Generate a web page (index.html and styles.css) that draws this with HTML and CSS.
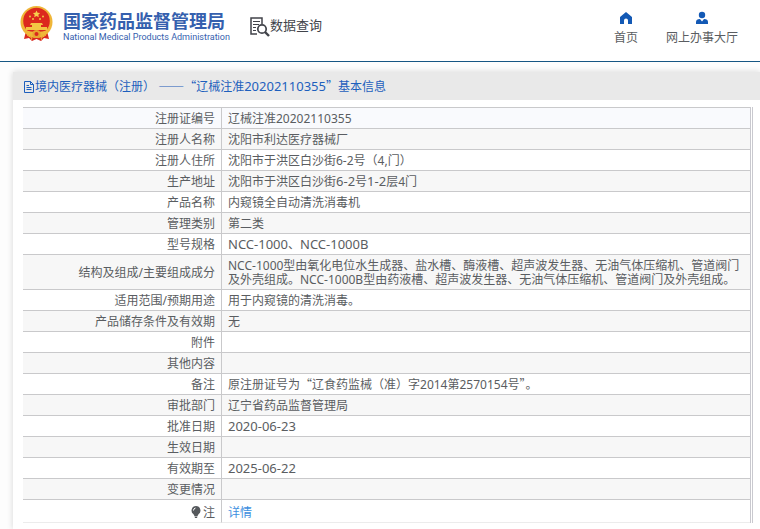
FILE: index.html
```html
<!DOCTYPE html>
<html lang="zh-CN">
<head>
<meta charset="utf-8">
<title>数据查询</title>
<link rel="stylesheet" href="styles.css">
</head>
<body>
<header class="header">
  <div class="brand">
    <svg class="emblem" viewBox="0 0 33 36" aria-hidden="true">
      <path d="M6 25L4 33l5-1 3 3 4.500-2 4.500 2 3-3 5 1-2-8z" fill="#d9281f"/>
      <circle cx="16.500" cy="16" r="16" fill="#efb638"/>
      <circle cx="16.500" cy="15" r="13.300" fill="#dc291e"/>
      <path d="M16.500 4.500l1.100 2.300 2.500.300-1.800 1.700.5 2.500-2.300-1.200-2.300 1.200.5-2.500-1.800-1.700 2.500-.3z" fill="#f6d04d"/>
      <g fill="#f3c544"><circle cx="10" cy="10.500" r="1"/><circle cx="13" cy="13" r="1"/><circle cx="20" cy="13" r="1"/><circle cx="23" cy="10.500" r="1"/>
      <path d="M11 17h11l1 2H10zM12 19h9v2h-9zM6 21h21v3H6z"/></g>
      <path d="M5 24q11.500 4 23 0l-3 4q-8.500 3-17 0z" fill="#f0b83a"/>
      <circle cx="16.500" cy="28" r="4" fill="#e7a52f"/><circle cx="16.500" cy="28" r="2" fill="#d9281f"/>
      <path d="M7 29l5 3-1 2M26 29l-5 3 1 2" fill="none" stroke="#f0b83a"/>
    </svg>
    <div class="names">
      <span class="name-zh">国家药品监督管理局</span>
      <span class="name-en">National Medical Products Administration</span>
    </div>
  </div>
  <div class="section">
    <svg class="search-icon" viewBox="0 0 20 20" aria-hidden="true" fill="none" stroke="#41434a">
      <path d="M7 17H1V1h11v6" stroke-width="1.500"/><path d="M3 4.500h7M3 7.500h6M3 10.500h3M3 13.500h3" stroke-width="1.200"/>
      <circle cx="12" cy="12" r="4.200" stroke-width="1.700"/><path d="M15 15l4 4" stroke-width="2.400"/>
    </svg>
    <span>数据查询</span>
  </div>
  <nav class="nav">
    <a href="#home"><svg viewBox="0 0 14 14" aria-hidden="true"><path d="M7 1L1 6v7h4V9.500q0-2 2-2t2 2V13h4V6z" fill="#1359b5"/></svg>首页</a>
    <a href="#hall"><svg viewBox="0 0 14 14" aria-hidden="true"><circle cx="7" cy="4" r="3.200" fill="#1359b5"/><path d="M1 13V11q0-3 4-3l2 2.500L9 8q4 0 4 3v2z" fill="#1359b5"/></svg>网上办事大厅</a>
  </nav>
</header>
<main class="panel">
  <h1 class="title"><svg viewBox="0 0 12 12" aria-hidden="true" fill="none" stroke="#1d5fbd"><path d="M1.500.5h6l3 3v8h-9zM7.500.5v3h3M3.500 4.500H6M3.500 6.500h5M3.500 8.500h5"/></svg><span>境内医疗器械（注册） <span class="dash">——</span><span class="cjk">“</span>辽械注准<span class="latin">20202110355</span><span class="cjk">”</span>基本信息</span></h1>
  <div class="content">
    <table class="info">
      <tbody>
        <tr class="first"><th scope="row">注册证编号</th><td>辽械注准20202110355</td></tr>
        <tr><th scope="row">注册人名称</th><td>沈阳市利达医疗器械厂</td></tr>
        <tr><th scope="row">注册人住所</th><td>沈阳市于洪区白沙街6-2号（4,门）</td></tr>
        <tr><th scope="row">生产地址</th><td>沈阳市于洪区白沙街<span class="latin">6-2</span>号<span class="latin">1-2</span>层4门</td></tr>
        <tr><th scope="row">产品名称</th><td>内窥镜全自动清洗消毒机</td></tr>
        <tr><th scope="row">管理类别</th><td>第二类</td></tr>
        <tr><th scope="row">型号规格</th><td><span class="latin">NCC-1000</span>、<span class="latin">NCC-1000B</span></td></tr>
        <tr><th scope="row">结构及组成/主要组成成分</th><td>NCC-1000型由氧化电位水生成器、盐水槽、酶液槽、超声波发生器、无油气体压缩机、管道阀门及外壳组成。NCC-1000B型由药液槽、超声波发生器、无油气体压缩机、管道阀门及外壳组成。</td></tr>
        <tr><th scope="row">适用范围/预期用途</th><td>用于内窥镜的清洗消毒。</td></tr>
        <tr><th scope="row">产品储存条件及有效期</th><td>无</td></tr>
        <tr><th scope="row">附件</th><td></td></tr>
        <tr><th scope="row">其他内容</th><td></td></tr>
        <tr><th scope="row">备注</th><td>原注册证号为<span class="cjk">“</span>辽食药监械（准）字2014第2570154号<span class="cjk">”</span>。</td></tr>
        <tr><th scope="row">审批部门</th><td>辽宁省药品监督管理局</td></tr>
        <tr><th scope="row">批准日期</th><td><span class="latin">2020-06-23</span></td></tr>
        <tr><th scope="row">生效日期</th><td></td></tr>
        <tr><th scope="row">有效期至</th><td><span class="latin">2025-06-22</span></td></tr>
        <tr><th scope="row">变更情况</th><td></td></tr>
        <tr class="note"><th scope="row"><svg viewBox="0 0 10 12" aria-hidden="true"><path d="M5 0a4.500 4.500 0 0 1 2.500 8.200L6.500 10h-3l-1-1.800A4.500 4.500 0 0 1 5 0zM3.500 10.500h3L6 12H4z" fill="#55585c"/><path d="M2.500 4.500q0-2 2-2.500" stroke="#fff" fill="none"/></svg>注</th><td><a href="#detail">详情</a></td></tr>
      </tbody>
    </table>
  </div>
</main>
</body>
</html>
```
FILE: styles.css
```css
* { box-sizing: border-box; }
body {
  margin: 0;
  background: #fdfdfd;
  color: #5a5d61;
  font: 12px/14px "Noto Sans", "Noto Sans CJK SC", sans-serif;
}
a { color: inherit; text-decoration: none; }
.cjk, .dash { font-family: "Noto Sans CJK SC", sans-serif; line-height: 1; }
.dash { font-size: 13px; }
.latin { font-size: 13px; line-height: 1; }

.header {
  display: flex;
  align-items: flex-start;
  height: 62px;
  padding: 6px 22px 0 20px;
  border-bottom: 1px solid #175784;
  background: #fff;
}
.brand { display: flex; gap: 10px; }
.emblem { width: 33px; height: 36px; }
.names { display: flex; flex-direction: column; padding-top: 4px; color: #3560ae; white-space: nowrap; }
.name-zh { font: bold 18px/20px "Noto Sans CJK SC", sans-serif; }
.name-en { font: 9px/14px Roboto, sans-serif; }
.section {
  display: flex;
  align-items: center;
  margin: 7px 0 0 20px;
  color: #41434a;
  font-size: 13px;
  line-height: 22px;
}
.search-icon { width: 20px; height: 20px; margin-top: 4px; }
.nav { display: flex; gap: 28px; margin-left: auto; padding-top: 5px; }
.nav a { display: flex; flex-direction: column; align-items: center; line-height: 26px; }
.nav svg { width: 14px; height: 14px; }

.panel {
  margin: 10px 0 0 13px;
  min-height: calc(100vh - 72px);
  box-shadow: 0 0 6px #d5d5d5;
  background: #fff;
}
.title {
  display: flex;
  align-items: center;
  margin: 0;
  padding: 1px 10px 0;
  height: 28px;
  background: #e9e9e9;
  color: #1d5fbd;
  font-size: 12px;
  font-weight: normal;
  white-space: pre;
}
.title svg { width: 12px; height: 12px; }
.content { padding: 7px 7px 0 10px; }
.info {
  width: 100%;
  border-spacing: 0;
  border-right: 3px double #c9c9cf;
}
.info th, .info td {
  height: 21px;
  padding: 4px 6px 2px;
  border-top: 1px solid #c9c9cb;
  line-height: 14px;
}
.info th {
  width: 199px;
  border-right: 1px solid #c9c9cb;
  font-weight: normal;
  text-align: right;
}
.info tr:nth-child(even) { background: #f7f7f7; }
.info .first { background: #f9fafd; }
.info .note th, .info .note td { height: 24px; padding-top: 6px; border-bottom: 1px solid #ececec; }
.info .note svg { width: 10px; height: 12px; margin-right: 2px; vertical-align: -1px; }
.info .note a { color: #3d8fe0; }
```
